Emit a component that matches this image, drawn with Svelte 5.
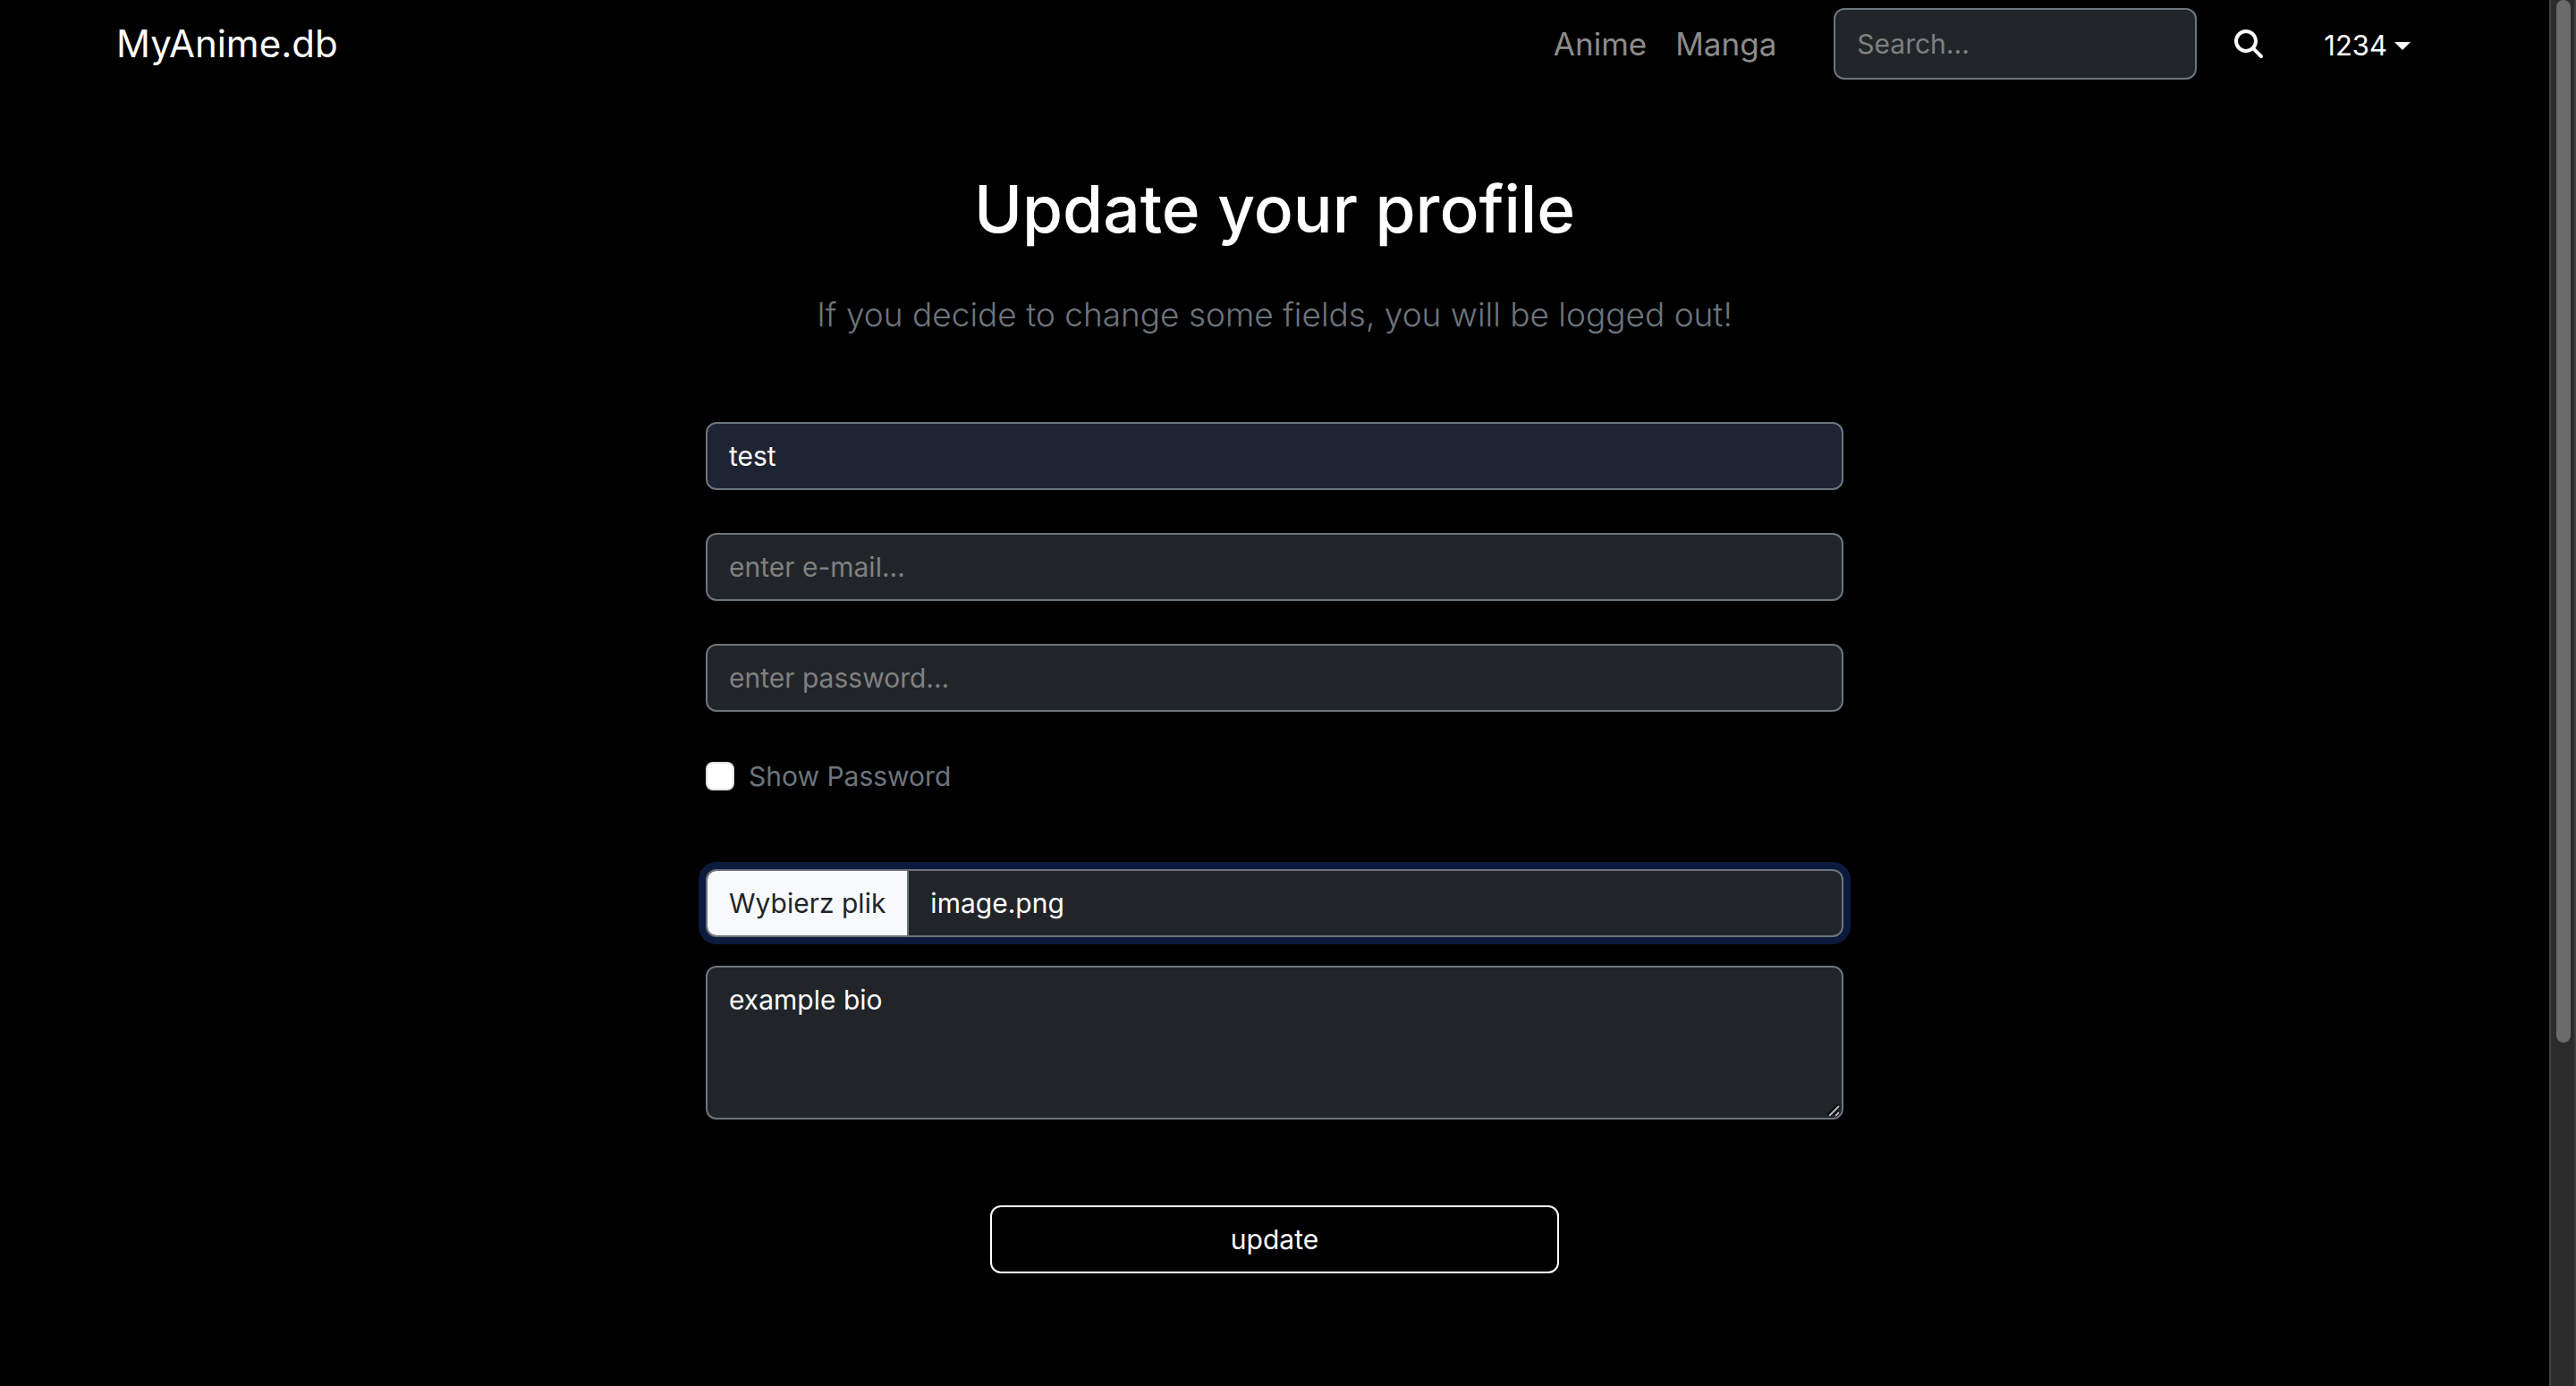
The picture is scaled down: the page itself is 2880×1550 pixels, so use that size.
<script>
  let username = $state('test');
  let email = $state('');
  let password = $state('');
  let showPassword = $state(false);
  let bio = $state('example bio');
  let fileName = $state('image.png');
  let query = $state('');

  function pickFile(event) {
    const file = event.currentTarget.files[0];
    if (file) fileName = file.name;
  }
</script>

<div class="shell">
  <div class="page">
    <header class="navbar">
      <a class="brand" href="#home">MyAnime.db</a>
      <nav class="links" aria-label="Main">
        <a href="#anime">Anime</a>
        <a href="#manga">Manga</a>
      </nav>
      <form class="search" role="search" onsubmit={(e) => e.preventDefault()}>
        <input class="control search-box" type="search" aria-label="Search" placeholder="Search..." bind:value={query} />
        <button class="icon-button" type="submit" aria-label="Search">
          <svg viewBox="0 0 512 512" aria-hidden="true">
            <path d="M416 208c0 45.900-14.900 88.300-40 122.700L502.600 457.400c12.500 12.500 12.500 32.800 0 45.300s-32.800 12.500-45.300 0L330.700 376c-34.400 25.200-76.800 40-122.700 40C93.100 416 0 322.900 0 208S93.100 0 208 0S416 93.100 416 208zM208 352a144 144 0 1 0 0-288 144 144 0 1 0 0 288z" />
          </svg>
        </button>
      </form>
      <button class="user" type="button" aria-haspopup="menu">
        <span>1234</span>
        <i class="caret"></i>
      </button>
    </header>

    <main>
      <h1>Update your profile</h1>
      <p class="lead">If you decide to change some fields, you will be logged out!</p>

      <form class="profile" onsubmit={(e) => e.preventDefault()}>
        <input class="control filled" type="text" aria-label="Username" bind:value={username} />
        <input class="control" type="email" aria-label="E-mail" placeholder="enter e-mail..." bind:value={email} />
        <input
          class="control"
          type={showPassword ? 'text' : 'password'}
          aria-label="Password"
          placeholder="enter password..."
          bind:value={password}
        />
        <div class="check">
          <input id="show-password" type="checkbox" bind:checked={showPassword} />
          <label for="show-password">Show Password</label>
        </div>
        <div class="uploads">
          <label class="file">
            <input type="file" onchange={pickFile} />
            <span class="file-button">Wybierz plik</span>
            <span class="file-name">{fileName}</span>
          </label>
          <div class="bio">
            <textarea class="control" aria-label="Bio" bind:value={bio}></textarea>
            <svg class="grip" viewBox="0 0 16 16" aria-hidden="true">
              <path d="M1 14L13 2M8 14L13 9" stroke="#0b0c0e" stroke-width="5" />
              <path d="M2 14L13 3M9 14L13 10" stroke="#b4b6b8" stroke-width="2" />
            </svg>
          </div>
        </div>
        <button class="submit" type="submit">update</button>
      </form>
    </main>
  </div>
  <div class="scrollbar" aria-hidden="true"><div class="thumb"></div></div>
</div>

<style>
  :global(body) {
    margin: 0;
    background: #000;
  }

  .shell {
    display: grid;
    grid-template-columns: minmax(0, 1fr) 30px;
    min-height: 100vh;
    background: #000;
    color: #fff;
    font-family: Inter, 'Noto Sans', sans-serif;
    font-size: 30px;
    line-height: 48px;
  }

  .shell * {
    box-sizing: border-box;
  }

  a {
    color: inherit;
    text-decoration: none;
  }

  button,
  input,
  textarea {
    font: inherit;
    color: inherit;
    margin: 0;
  }

  .navbar {
    display: flex;
    align-items: center;
    height: 98px;
    padding: 0 155px 0 130px;
  }

  .brand {
    margin-right: auto;
    font-size: 42px;
  }

  .links {
    display: flex;
    gap: 32px;
    margin-right: 64px;
    color: #8c8c8c;
    font-size: 35px;
  }

  .search {
    display: flex;
    align-items: center;
  }

  .control {
    display: block;
    width: 100%;
    height: 76px;
    padding: 12px 24px;
    border: 2px solid #6c757d;
    border-radius: 12px;
    background: #212529;
    outline: none;
    appearance: none;
  }

  .control::placeholder {
    color: #808080;
    opacity: 1;
  }

  .search-box {
    width: 406px;
    height: 80px;
  }

  .icon-button {
    display: flex;
    padding: 0;
    margin: 0 68px 0 42px;
    border: 0;
    background: none;
  }

  .icon-button svg {
    width: 32px;
    height: 32px;
    fill: #fff;
  }

  .user {
    display: flex;
    align-items: center;
    gap: 8px;
    padding: 4px 0 0;
    border: 0;
    background: none;
    font-size: 31px;
  }

  .caret {
    border: 9px solid transparent;
    border-top-color: #fff;
    border-bottom: 0;
  }

  main {
    padding: 0 48px;
    text-align: center;
  }

  h1 {
    margin: 88px 0 0;
    font-size: 73px;
    line-height: 96px;
    font-weight: 500;
  }

  .lead {
    margin: 40px 0 0;
    color: #6c757d;
    font-size: 37px;
    line-height: 60px;
    font-weight: 300;
  }

  .profile {
    display: flex;
    flex-direction: column;
    gap: 48px;
    max-width: 1272px;
    margin: 90px auto 0;
    text-align: left;
  }

  .filled {
    background: #1e2433;
  }

  .check {
    display: flex;
    align-items: center;
    gap: 16px;
    color: #6c757d;
  }

  .check input {
    width: 32px;
    height: 32px;
    border: 2px solid #dee2e6;
    border-radius: 8px;
    background: #fff;
    appearance: none;
  }

  .check input:checked {
    background: #0d6efd;
  }

  .uploads {
    display: grid;
    gap: 32px;
    margin-top: 32px;
  }

  .file {
    position: relative;
    display: flex;
    height: 76px;
    overflow: hidden;
    border: 2px solid #6c757d;
    border-radius: 12px;
    background: #212529;
    box-shadow: 0 0 0 8px #0b1a3d;
  }

  .file input {
    position: absolute;
    inset: 0;
    opacity: 0;
  }

  .file-button,
  .file-name {
    padding: 12px 24px;
  }

  .file-button {
    border-right: 2px solid #6c757d;
    background: #f8f9fc;
    color: #212529;
  }

  .bio {
    position: relative;
  }

  .bio textarea {
    height: 172px;
    resize: none;
  }

  .grip {
    position: absolute;
    right: 2px;
    bottom: 2px;
    width: 16px;
    height: 16px;
  }

  .submit {
    width: 50%;
    height: 76px;
    margin: 48px auto;
    border: 2px solid #fff;
    border-radius: 12px;
    background: none;
  }

  .scrollbar {
    padding-left: 6px;
    border: solid #414141;
    border-width: 0 2px;
    background: #2c2c2c;
  }

  .thumb {
    width: 16px;
    height: 75.2vh;
    border-radius: 8px;
    background: #6b6b6b;
  }
</style>
